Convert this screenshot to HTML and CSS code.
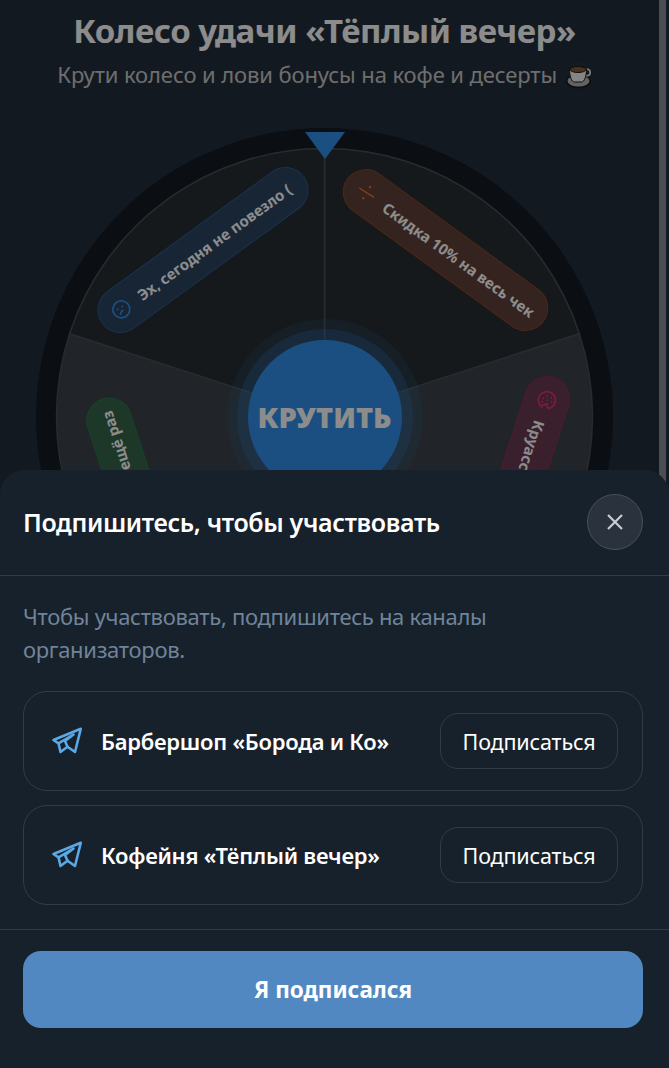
FILE: index.html
```html
<!DOCTYPE html>
<html lang="ru">
<head>
  <meta charset="UTF-8">
  <meta name="viewport" content="width=device-width, initial-scale=1.0">
  <title>Колесо удачи</title>
  <link rel="stylesheet" href="styles.css">
</head>
<body>
  <div class="page">
    <h1 class="title">Колесо удачи «Тёплый вечер»</h1>
    <p class="subtitle">Крути колесо и лови бонусы на кофе и десерты
      <svg class="cup" viewBox="0 0 26 28">
        <ellipse cx="12.5" cy="20.5" rx="12.5" ry="7" fill="#1c1c1c"/>
        <ellipse cx="12.5" cy="20" rx="11" ry="5.5" fill="#b5b5b5"/>
        <circle cx="21" cy="11.5" r="3.2" fill="none" stroke="#e8e8e8" stroke-width="1.6"/>
        <path d="M3.5 8h17c0 7-2 13-5 13h-7c-3 0-5-6-5-13z" fill="#f2f2f2" stroke="#1c1c1c"/>
        <ellipse cx="12" cy="8.5" rx="8" ry="3" fill="#8a5a35" stroke="#1c1c1c"/>
        <path d="M7 4l1-2M12 4l1-3M17 4l-1-2" stroke="#3a3a3a" stroke-width="1.4"/>
      </svg>
    </p>

    <div class="wheel">
      <svg class="wheel-face" viewBox="0 0 577 577">
        <circle cx="288.5" cy="288.5" r="288.5" fill="#141a21"/>
        <!-- сектора -->
        <path class="sector-dark" d="M288.5 288.5V20.5A268 268 0 0 1 543.4 205.7z"/>
        <path class="sector-light" d="M288.5 288.5L543.4 205.7A268 268 0 0 1 446 505.3z"/>
        <path class="sector-dark" d="M288.5 288.5L446 505.3A268 268 0 0 1 131 505.3z"/>
        <path class="sector-light" d="M288.5 288.5L131 505.3A268 268 0 0 1 33.6 205.7z"/>
        <path class="sector-dark" d="M288.5 288.5L33.6 205.7A268 268 0 0 1 288.5 20.5z"/>
      </svg>
      <svg class="pointer" viewBox="0 0 40 27"><path d="M0 0h40L20 27z"/></svg>

      <div class="pill pill-blue pill-lose">
        <svg class="pill-icon" viewBox="0 0 20 20">
          <circle cx="10" cy="10" r="8.5"/>
          <path d="M6.5 13.5c1-1.5 2.5-2 4-1.8"/>
          <path d="M7 7.5v.5M12.5 8v.5"/>
        </svg>
        <span>Эх, сегодня не повезло (</span>
      </div>
      <div class="pill pill-orange pill-sale">
        <svg class="pill-icon" viewBox="0 0 20 20">
          <path d="M2 10.5l16-1"/>
          <circle class="dot" cx="9.5" cy="3.5" r="1.3"/>
          <circle class="dot" cx="10.5" cy="16.5" r="1.3"/>
        </svg>
        <span>Скидка 10% на весь чек</span>
      </div>
      <div class="pill pill-pink pill-gift">
        <svg class="pill-icon" viewBox="0 0 20 20">
          <path d="M17.5 6A8.5 8.5 0 1 0 18 13c-1.5 0-2.5-1-2.6-2.3-1.3-.2-2-1.3-1.7-2.5 1.5.3 3-.5 3.8-2.2z"/>
          <path class="crumbs" d="M6.5 6.5v.1M10 5v.1M6 11v.1M10 9.5v.1M9.5 14v.1M13 14v.1"/>
        </svg>
        <span>Круассан в подарок</span>
      </div>
      <div class="pill pill-green pill-again">
        <svg class="pill-icon" viewBox="0 0 20 20">
          <circle cx="10" cy="10" r="7"/>
        </svg>
        <span>Крути ещё раз</span>
      </div>

      <button class="spin">КРУТИТЬ</button>
    </div>
  </div>

  <div class="overlay"></div>

  <div class="sheet">
    <div class="sheet-head">
      <h2 class="sheet-title">Подпишитесь, чтобы участвовать</h2>
      <button class="close" aria-label="Закрыть">
        <svg viewBox="0 0 18 18"><path d="M2 2l14 14M16 2L2 16"/></svg>
      </button>
    </div>
    <div class="sheet-body">
      <p class="hint">Чтобы участвовать, подпишитесь на каналы организаторов.</p>

      <div class="channel">
        <svg class="tg" viewBox="0 0 30 28">
          <path d="M1.5 13L28.8 1.8 23 25l-7.5-5.2-7 5.2-2-8.7z"/>
          <path d="M6.5 16.3L21.5 7.5 13 14l2.5 5.8"/>
        </svg>
        <span class="channel-name">Барбершоп «Борода и Ко»</span>
        <button class="sub">Подписаться</button>
      </div>
      <div class="channel">
        <svg class="tg" viewBox="0 0 30 28">
          <path d="M1.5 13L28.8 1.8 23 25l-7.5-5.2-7 5.2-2-8.7z"/>
          <path d="M6.5 16.3L21.5 7.5 13 14l2.5 5.8"/>
        </svg>
        <span class="channel-name">Кофейня «Тёплый вечер»</span>
        <button class="sub">Подписаться</button>
      </div>
    </div>
    <div class="sheet-foot">
      <button class="done">Я подписался</button>
    </div>
  </div>
</body>
</html>
```

FILE: styles.css
```css
* {
  box-sizing: border-box;
}
body {
  margin: 0;
  height: 1068px;
  overflow: hidden;
  font-family: "Noto Sans", "Open Sans", sans-serif;
  background-color: #232f3c;
  color: #fff;
}
button {
  font-family: inherit;
  cursor: pointer;
}

/* страница под шторкой */
.page {
  width: 649px;
  text-align: center;
}
.title {
  margin: 0;
  padding-top: 9px;
  font-size: 33px;
  line-height: 44px;
  font-weight: 700;
  letter-spacing: -0.48px;
  white-space: nowrap;
}
.subtitle {
  margin: 6px 0 0;
  font-size: 22px;
  line-height: 30px;
  letter-spacing: -0.1px;
  color: #c9c9c9;
  white-space: nowrap;
}
.cup {
  width: 26px;
  height: 28px;
  vertical-align: -6px;
  margin-left: 3px;
}

/* колесо */
.wheel {
  position: relative;
  width: 577px;
  height: 577px;
  margin: 39px auto 0;
  border-radius: 50%;
}
.wheel-face {
  display: block;
  width: 100%;
  height: 100%;
}
.sector-dark, .sector-light {
  stroke: #4a4f55;
  stroke-width: 1.5;
}
.sector-dark {
  fill: #282e34;
}
.sector-light {
  fill: #3c4349;
}
.pointer {
  position: absolute;
  left: 269px;
  top: 4px;
  width: 40px;
  height: 27px;
}
.pointer path {
  fill: #3390ec;
}
.pill {
  position: absolute;
  display: flex;
  align-items: center;
  gap: 12px;
  height: 46px;
  padding: 0 13px;
  border-radius: 23px;
  border: 1px solid;
  font-size: 15px;
  font-weight: 700;
  white-space: nowrap;
  color: #fff;
}
.pill-icon {
  flex: none;
  width: 20px;
  height: 20px;
  fill: none;
  stroke-width: 1.7;
  stroke-linecap: round;
}
.pill-blue {
  background-color: #2a4461;
  border-color: #2b5c92;
}
.pill-blue .pill-icon {
  stroke: #3390ec;
}
.pill-orange {
  background-color: #5f4038;
  border-color: #8c4a25;
}
.pill-orange .pill-icon {
  stroke: #e8682a;
}
.pill-orange .dot {
  fill: #e8682a;
  stroke: none;
}
.pill-pink {
  background-color: #6b3a50;
  border-color: #8f2f58;
}
.pill-pink .pill-icon {
  stroke: #e0306f;
}
.pill-pink .crumbs {
  stroke-width: 2;
}
.pill-green {
  background-color: #35644a;
  border-color: #2b7a4a;
}
.pill-green .pill-icon {
  stroke: #34c06a;
}
/* координаты задаются положением на колесе */
.pill-lose {
  width: 250px;
  left: 41.5px;
  top: 98.5px;
  transform: rotate(-36deg);
}
.pill-sale {
  width: 243px;
  left: 288px;
  top: 98.5px;
  transform: rotate(36deg);
}
.pill-gift {
  width: 216px;
  left: 377px;
  top: 329px;
  transform: rotate(108deg);
}
.pill-again {
  width: 171px;
  left: 6.5px;
  top: 329px;
  transform: rotate(252deg);
}
.spin {
  position: absolute;
  left: 211.5px;
  top: 211.5px;
  width: 154px;
  height: 154px;
  padding: 0;
  border: none;
  border-radius: 50%;
  background-color: #3390ec;
  box-shadow: 0 0 0 11px rgba(51, 144, 236, 0.22), 0 0 0 21px rgba(51, 144, 236, 0.1);
  color: #fff;
  font-size: 29px;
  font-weight: 900;
}

/* затемнение */
.overlay {
  position: fixed;
  inset: 0;
  background-color: rgba(0, 0, 0, 0.45);
}
.overlay::after {
  content: "";
  position: absolute;
  top: 0;
  bottom: 0;
  right: 3px;
  width: 7px;
  background-color: #4a4e53;
}

/* шторка */
.sheet {
  position: fixed;
  left: 0;
  right: 0;
  bottom: 0;
  height: 598px;
  background-color: #17212b;
  border-radius: 24px 24px 0 0;
}
.sheet-head {
  display: flex;
  align-items: center;
  justify-content: space-between;
  height: 106px;
  padding: 0 26px 1px 23px;
  border-bottom: 1px solid #323c46;
}
.sheet-title {
  margin: 0;
  font-size: 25px;
  font-weight: 600;
  letter-spacing: -0.35px;
}
.close {
  display: flex;
  align-items: center;
  justify-content: center;
  width: 56px;
  height: 56px;
  padding: 0;
  border: 1px solid #48515a;
  border-radius: 50%;
  background-color: #2a333d;
}
.close svg {
  width: 18px;
  height: 18px;
  fill: none;
  stroke: #c9ccd0;
  stroke-width: 2.2;
}
.sheet-body {
  padding: 24px 26px 24px 23px;
  border-bottom: 1px solid #323c46;
}
.hint {
  max-width: 500px;
  margin: 0 0 25px;
  font-size: 22px;
  line-height: 33px;
  letter-spacing: -0.3px;
  color: #708499;
}
.channel {
  display: flex;
  align-items: center;
  height: 100px;
  padding: 0 24px 0 28px;
  border: 1px solid #323c46;
  border-radius: 24px;
}
.channel + .channel {
  margin-top: 14px;
}
.tg {
  flex: none;
  width: 30px;
  height: 28px;
  margin-right: 19px;
  fill: none;
  stroke: #5aa9e6;
  stroke-width: 2.6;
  stroke-linejoin: round;
  stroke-linecap: round;
}
.channel-name {
  flex: 1;
  font-size: 22px;
  font-weight: 600;
  letter-spacing: -0.25px;
  white-space: nowrap;
}
.sub {
  flex: none;
  width: 178px;
  height: 56px;
  padding: 0;
  border: 1px solid #323c46;
  border-radius: 18px;
  background-color: transparent;
  color: #fff;
  font-size: 21.5px;
  letter-spacing: -0.15px;
}
.sheet-foot {
  padding: 21px 26px 0 23px;
}
.done {
  display: block;
  width: 100%;
  height: 77px;
  border: none;
  border-radius: 18px;
  background-color: #5288c1;
  color: #fff;
  font-size: 22.5px;
  font-weight: 700;
}
```
